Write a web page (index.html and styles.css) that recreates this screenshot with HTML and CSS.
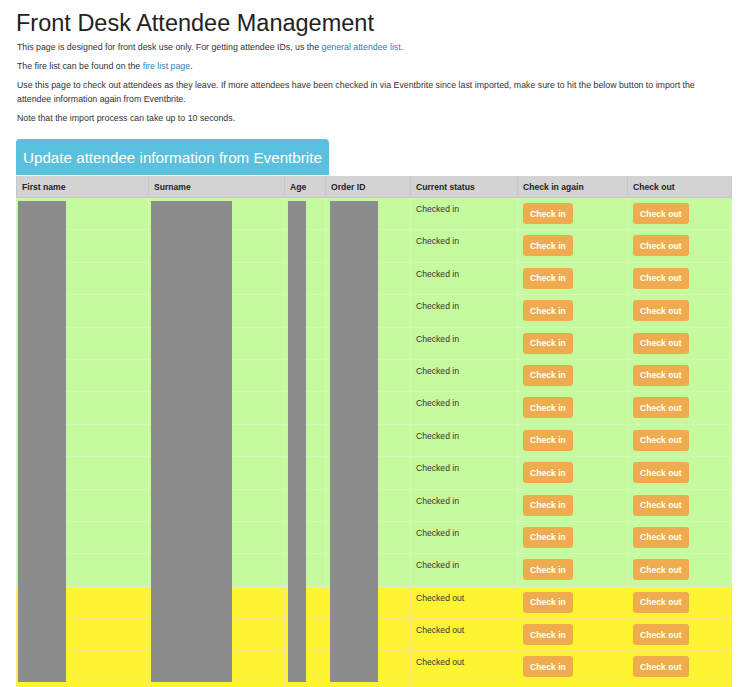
FILE: index.html
```html
<!DOCTYPE html>
<html>
<head>
<meta charset="utf-8">
<title>Front Desk Attendee Management</title>
<link rel="stylesheet" href="styles.css">
</head>
<body>
<div class="page">
  <h1 class="title">Front Desk Attendee Management</h1>
  <p>This page is designed for front desk use only. For getting attendee IDs, us the <a href="#">general attendee list</a>.</p>
  <p>The fire list can be found on the <a href="#">fire list page</a>.</p>
  <p>Use this page to check out attendees as they leave. If more attendees have been checked in via Eventbrite since last imported, make sure to hit the below button to import the attendee information again from Eventbrite.</p>
  <p>Note that the import process can take up to 10 seconds.</p>
  <button class="update-btn">Update attendee information from Eventbrite</button>
  <div class="table-wrap">
    <table class="attendees">
      <colgroup>
        <col class="c-first"><col class="c-sur"><col class="c-age"><col class="c-order"><col class="c-status"><col class="c-in"><col class="c-out">
      </colgroup>
      <thead>
        <tr>
          <th>First name</th>
          <th>Surname</th>
          <th>Age</th>
          <th>Order ID</th>
          <th>Current status</th>
          <th>Check in again</th>
          <th>Check out</th>
        </tr>
      </thead>
      <tbody>
        <tr class="in"><td></td><td></td><td></td><td></td><td>Checked in</td><td><button class="act">Check in</button></td><td><button class="act">Check out</button></td></tr>
        <tr class="in"><td></td><td></td><td></td><td></td><td>Checked in</td><td><button class="act">Check in</button></td><td><button class="act">Check out</button></td></tr>
        <tr class="in"><td></td><td></td><td></td><td></td><td>Checked in</td><td><button class="act">Check in</button></td><td><button class="act">Check out</button></td></tr>
        <tr class="in"><td></td><td></td><td></td><td></td><td>Checked in</td><td><button class="act">Check in</button></td><td><button class="act">Check out</button></td></tr>
        <tr class="in"><td></td><td></td><td></td><td></td><td>Checked in</td><td><button class="act">Check in</button></td><td><button class="act">Check out</button></td></tr>
        <tr class="in"><td></td><td></td><td></td><td></td><td>Checked in</td><td><button class="act">Check in</button></td><td><button class="act">Check out</button></td></tr>
        <tr class="in"><td></td><td></td><td></td><td></td><td>Checked in</td><td><button class="act">Check in</button></td><td><button class="act">Check out</button></td></tr>
        <tr class="in"><td></td><td></td><td></td><td></td><td>Checked in</td><td><button class="act">Check in</button></td><td><button class="act">Check out</button></td></tr>
        <tr class="in"><td></td><td></td><td></td><td></td><td>Checked in</td><td><button class="act">Check in</button></td><td><button class="act">Check out</button></td></tr>
        <tr class="in"><td></td><td></td><td></td><td></td><td>Checked in</td><td><button class="act">Check in</button></td><td><button class="act">Check out</button></td></tr>
        <tr class="in"><td></td><td></td><td></td><td></td><td>Checked in</td><td><button class="act">Check in</button></td><td><button class="act">Check out</button></td></tr>
        <tr class="in"><td></td><td></td><td></td><td></td><td>Checked in</td><td><button class="act">Check in</button></td><td><button class="act">Check out</button></td></tr>
        <tr class="out"><td></td><td></td><td></td><td></td><td>Checked out</td><td><button class="act">Check in</button></td><td><button class="act">Check out</button></td></tr>
        <tr class="out"><td></td><td></td><td></td><td></td><td>Checked out</td><td><button class="act">Check in</button></td><td><button class="act">Check out</button></td></tr>
        <tr class="out"><td></td><td></td><td></td><td></td><td>Checked out</td><td><button class="act">Check in</button></td><td><button class="act">Check out</button></td></tr>
        <tr class="out"><td></td><td></td><td></td><td></td><td>Checked out</td><td><button class="act">Check in</button></td><td><button class="act">Check out</button></td></tr>
      </tbody>
    </table>
    <div class="redact r-first"></div>
    <div class="redact r-sur"></div>
    <div class="redact r-age"></div>
    <div class="redact r-order"></div>
  </div>
</div>
</body>
</html>
```
FILE: styles.css
```css
html, body {
  margin: 0;
  padding: 0;
  background: #fff;
}
body {
  font-family: "Liberation Sans", Arial, sans-serif;
  color: #333;
  font-size: 8.8px;
  line-height: 14px;
  overflow: hidden;
}
.page {
  padding: 0 20px 0 16px;
}
.title {
  margin: 0;
  padding-top: 9px;
  font-size: 23.5px;
  line-height: 28px;
  font-weight: normal;
  color: #222;
  margin-bottom: 3px;
}
p {
  margin: 0 0 5px 1px;
}
a {
  color: #337ab7;
  text-decoration: none;
}
.update-btn {
  display: block;
  margin-top: 14px;
  height: 36px;
  padding: 0 7px;
  border: none;
  border-radius: 4px 4px 0 0;
  background: #5bc0de;
  color: #fff;
  font-family: "Liberation Sans", Arial, sans-serif;
  font-size: 15.2px;
  text-align: left;
}
.table-wrap {
  position: relative;
}
.attendees {
  width: 715px;
  border-collapse: collapse;
  table-layout: fixed;
  margin-top: 1px;
}
.c-first { width: 132px; }
.c-sur { width: 136px; }
.c-age { width: 41px; }
.c-order { width: 85px; }
.c-status { width: 107px; }
.c-in { width: 110px; }
.c-out { width: 104px; }
.attendees th {
  background: #d3d3d3;
  text-align: left;
  font-weight: bold;
  font-size: 8.6px;
  color: #222;
  height: 21px;
  padding: 0 5px;
  border: 1px solid #c8c8c8;
  border-top: none;
}
.attendees td {
  vertical-align: top;
  padding: 5px 5px 5.4px;
  height: 21px;
  font-size: 8.6px;
  line-height: 13px;
  color: #333;
}
.attendees tr.in td {
  background: #c5fa9f;
  border: 1px solid #d4f7bc;
}
.attendees tr.out td {
  background: #fff433;
  border: 1px solid #f4ec70;
}
.attendees td:first-child {
  border-left-color: #e9e27a;
}
.act {
  display: block;
  height: 21px;
  padding: 0 7px;
  border: none;
  border-radius: 3px;
  background: #efac4e;
  color: #fff;
  font-family: "Liberation Sans", Arial, sans-serif;
  font-size: 8.6px;
  font-weight: bold;
}
.redact {
  position: absolute;
  top: 25px;
  height: 481px;
  background: #8c8c8c;
}
.r-first { left: 2px; width: 48px; }
.r-sur { left: 135px; width: 81px; }
.r-age { left: 272px; width: 18px; }
.r-order { left: 314px; width: 48px; }
```
